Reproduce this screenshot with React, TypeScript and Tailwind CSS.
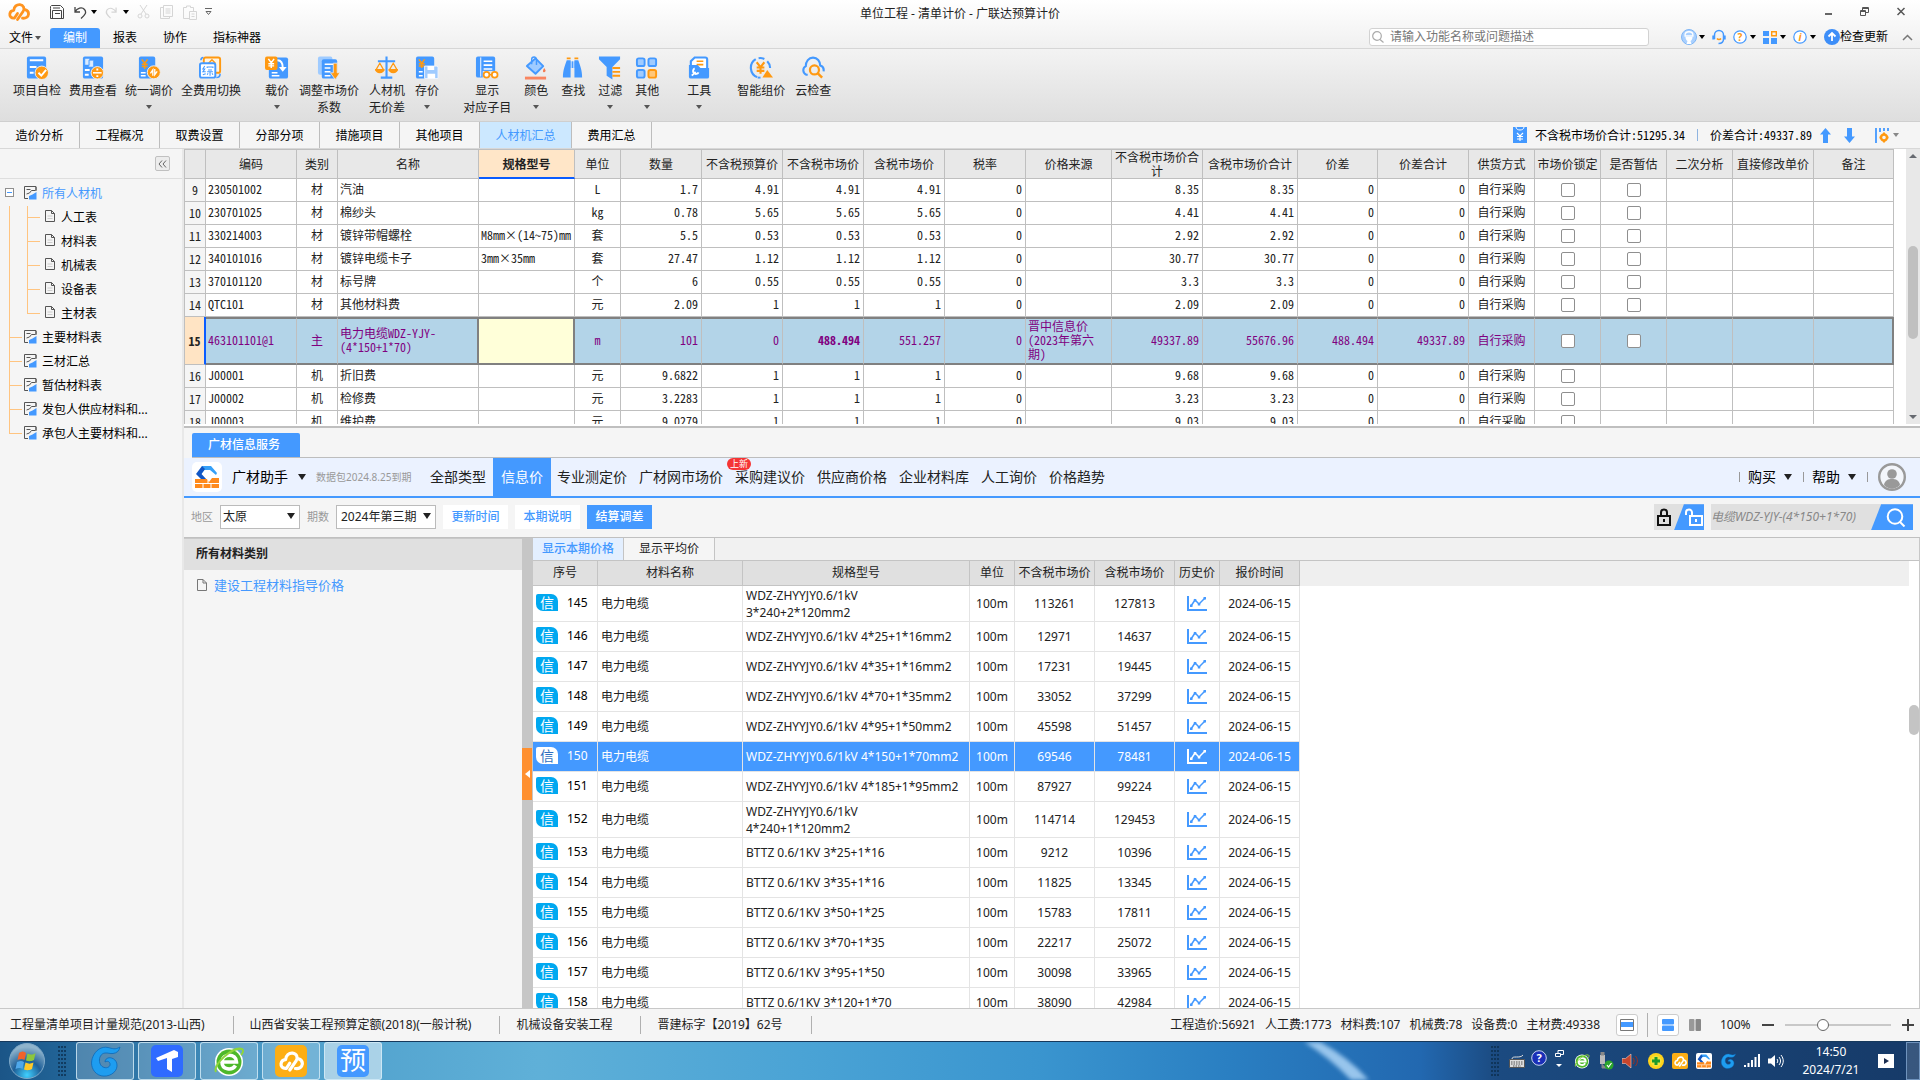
import type { ReactNode } from "react";

const BLUE = "#4499ff";
const ORANGE = "#ff9911";

function Caret({ className = "text-[#555]" }: { className?: string }) {
  return (
    <svg width="6" height="4" viewBox="0 0 6 4" className={className} aria-hidden="true">
      <path d="M0 0h6L3 4z" fill="currentColor" />
    </svg>
  );
}

function BigCaret() {
  return (
    <svg width="8" height="6" viewBox="0 0 8 6" className="text-[#222]" aria-hidden="true">
      <path d="M0 0h8L4 6z" fill="currentColor" />
    </svg>
  );
}

function CloudLogo({ color = "#ff9420", size = 22 }: { color?: string; size?: number }) {
  return (
    <svg width={size} height={size} viewBox="0 0 22 20" fill="none" stroke={color} strokeWidth="2.800" strokeLinecap="round" strokeLinejoin="round" aria-hidden="true">
      <path d="M9.500 11.500L6.500 16C3 16.500 1.500 14 1.800 12c.3-2.300 2-3.600 4-3.700C6 4.500 8.800 2.300 12 2.600c3.500.4 5 4 3.200 6.700L9.500 17.500" />
      <path d="M17 7.600c2.500.6 3.700 2.500 3.500 4.700-.3 2.700-2.700 4.300-6 3.900" />
    </svg>
  );
}

/* ---------- ribbon icons ---------- */

const icons: Record<string, ReactNode> = {
  check: (
    <>
      <rect x="2" y="0" width="20" height="23" rx="2" fill={BLUE} />
      <path d="M5 4h14M5 11h7M5 17h4" stroke="#fff" strokeWidth="2" />
      <circle cx="17.500" cy="17" r="7" fill={ORANGE} stroke="#eee" />
      <path d="M14 17l3 3 5-6" stroke="#fff" strokeWidth="2" fill="none" />
    </>
  ),
  view: (
    <>
      <rect x="2" y="0" width="21" height="23" rx="2" fill={BLUE} />
      <path d="M4 2h5v7H4zM8 4h5v7H8z" fill="#dcecff" stroke={BLUE} strokeWidth=".6" />
      <path d="M4 14h5M4 19h4" stroke="#fff" strokeWidth="2" />
      <circle cx="17" cy="17" r="6.500" fill={ORANGE} stroke="#eee" />
      <path d="M12.500 17h9" stroke="#fff" strokeWidth="1.600" />
      <path d="M17 12.500v2M17 19.500v2" stroke="#fff" strokeWidth="2" />
    </>
  ),
  unify: (
    <>
      <rect x="2" y="0" width="17" height="23" rx="2" fill={BLUE} />
      <path d="M5 3l3 4 3-4M8 7v6M5 8h6M5 10.500h6" stroke={ORANGE} strokeWidth="1.500" fill="none" />
      <path d="M4 17h5M4 20h5" stroke="#fff" strokeWidth="1.500" />
      <circle cx="17.500" cy="16.500" r="6.800" fill={ORANGE} stroke="#eee" />
      <path d="M14 17.500l2.500-3.500v6M21 15.500L18.500 19v-6" stroke="#fff" strokeWidth="1.400" fill="none" />
    </>
  ),
  full: (
    <>
      <rect x="5" y="1" width="17" height="16" rx="2" fill="#fff4e2" stroke={ORANGE} strokeWidth="2" />
      <path d="M10 7l3.500-3.500L17 7M10 9h7" stroke={ORANGE} strokeWidth="1.500" fill="none" />
      <rect x="1" y="7" width="16" height="15" rx="2" fill="#fff" stroke={BLUE} strokeWidth="2" />
      <path d="M6 10l-2 3h2l-2 3h3M4 19l3-1M8.500 12v-1h6v1M9.500 14h4M8.500 16h6M11.500 16v4M9.500 17.500L8.500 19M13.500 17.500l1 1.500" stroke={BLUE} strokeWidth="1.100" fill="none" />
      <path d="M22 18c0 2.500-1 4-4 4M2 4c0-1.500 1-3 2.500-3" stroke={BLUE} strokeWidth="1.600" fill="none" />
    </>
  ),
  load: (
    <>
      <rect x="4" y="1" width="20" height="22" rx="2" fill={BLUE} />
      <rect x="0" y="0" width="13" height="14" rx="2" fill={ORANGE} />
      <path d="M3.500 2.500l3 4 3-4M6.500 6.500V12M3.500 7.500h6M3.500 9.800h6" stroke="#fff" strokeWidth="1.500" fill="none" />
      <path d="M13 4c4 0 5.500 3 5.500 8" stroke="#fff" strokeWidth="2" fill="none" />
      <path d="M14.500 11h8l-4 5z" fill="#fff" />
      <path d="M7 17h6M7 20h8" stroke="#fff" strokeWidth="1.500" />
    </>
  ),
  adjust: (
    <>
      <rect x="1" y="0" width="15" height="19" rx="2" fill="#9fcbff" />
      <rect x="5" y="3" width="16" height="20" rx="2" fill={BLUE} />
      <path d="M8 8h9M8 12h6M8 16h6M8 20h6" stroke="#fff" strokeWidth="1.500" />
      <path d="M17 7h4v10h3l-5 7-5-7h3z" fill={ORANGE} stroke="#eee" strokeWidth=".8" />
    </>
  ),
  scale: (
    <>
      <path d="M12 0v21M3 5h18M6 22h12" stroke={BLUE} strokeWidth="2.200" fill="none" />
      <path d="M5 7l-4 7h8zM19 7l-4 7h8z" stroke={ORANGE} strokeWidth="1.300" fill="none" />
      <path d="M0 13h10a5 4.500 0 0 1-10 0zM14 13h10a5 4.500 0 0 1-10 0z" fill={ORANGE} />
    </>
  ),
  save: (
    <>
      <rect x="1" y="0" width="19" height="23" rx="2" fill={BLUE} />
      <path d="M4 3l3 4 3-4M7 7v5M4 7.500h6M4 10h6" stroke={ORANGE} strokeWidth="1.500" fill="none" />
      <path d="M4 16h4M4 20h4" stroke="#fff" strokeWidth="1.500" />
      <path d="M10 10h13l1 1v12H10z" fill="#9fcbff" stroke="#eef5ff" />
      <path d="M13 10h7v4h-7zM13 18h8v5h-8z" fill="#fff" />
    </>
  ),
  show: (
    <>
      <rect x="1" y="0" width="20" height="22" rx="2" fill={BLUE} />
      <path d="M6 1v20" stroke="#fff" />
      <path d="M9 5h9M9 9h9M9 13h9" stroke="#fff" strokeWidth="1.600" />
      <rect x="8" y="15" width="16" height="9" fill="#e6e6e6" />
      <circle cx="12" cy="19" r="3" stroke={ORANGE} strokeWidth="1.800" fill="#fff" />
      <circle cx="20.500" cy="19" r="3" stroke={ORANGE} strokeWidth="1.800" fill="#fff" />
      <path d="M15 19h3" stroke={ORANGE} strokeWidth="1.500" />
    </>
  ),
  color: (
    <>
      <path d="M3 10L12 2l8 8-8 8z" fill="#9fcbff" stroke={BLUE} strokeWidth="2" strokeLinejoin="round" />
      <path d="M8 8V3a2.500 2.500 0 0 1 5 0v6" stroke={BLUE} strokeWidth="1.500" fill="none" />
      <path d="M21 12c1.500 2 2 3 1 4s-3 0-2-2z" fill="#f47b50" />
      <rect x="1" y="21" width="22" height="3" fill="#f98560" />
    </>
  ),
  find: (
    <>
      <path d="M6 4h4v18H2C2 14 4 10 6 4zM14 4h4c2 6 4 10 4 18h-8z" fill={BLUE} />
      <path d="M10 5h4v7h-4z" fill={BLUE} />
      <path d="M6 1h4v2H6zM14 1h4v2h-4z" fill={ORANGE} />
      <path d="M11 4v8M13 4v8" stroke="#fff" strokeWidth=".6" />
    </>
  ),
  filter: (
    <>
      <path d="M1 0h22v3l-8 8v13l-6-4v-9L1 3z" fill={BLUE} />
      <path d="M15 12h8M15 16h8M15 20h8" stroke={ORANGE} strokeWidth="2" />
    </>
  ),
  other: (
    <>
      <rect x="2" y="2" width="8" height="8" rx="2" fill="#9fcbff" stroke={BLUE} strokeWidth="2" />
      <rect x="14" y="2" width="8" height="8" rx="2" fill="#9fcbff" stroke={BLUE} strokeWidth="2" />
      <rect x="2" y="14" width="8" height="8" rx="2" fill="#9fcbff" stroke={BLUE} strokeWidth="2" />
      <rect x="14" y="14" width="8" height="8" rx="2" fill="#ffc77a" stroke={ORANGE} strokeWidth="2" />
    </>
  ),
  tool: (
    <>
      <path d="M4 10V5l4-4h11a2 2 0 0 1 2 2v10" fill="#fff" stroke={BLUE} strokeWidth="2.200" />
      <path d="M10 5h7M10 8.500h7" stroke={ORANGE} strokeWidth="1.600" />
      <path d="M2 9h9l3 3h9v9a2 2 0 0 1-2 2H4a2 2 0 0 1-2-2z" fill={BLUE} />
      <path d="M5 20l4-4M8 12.500a3 3 0 1 0 4 4" stroke="#fff" strokeWidth="2" fill="none" />
    </>
  ),
  smart: (
    <>
      <path d="M8.500 21.500A10.500 10.500 0 0 1 7 2.800M10 1.800a10 10 0 0 1 6 .8M19 5a10 10 0 0 1 3 7" stroke={BLUE} strokeWidth="2.200" fill="none" />
      <path d="M8 6l4 5 4-5M12 11v7M8 11.500h8M8 15h8" stroke={ORANGE} strokeWidth="2.200" fill="none" />
      <path d="M19 14l6 8H14z" fill={ORANGE} />
      <path d="M9 22h3" stroke={BLUE} strokeWidth="2" />
    </>
  ),
  cloud: (
    <>
      <path d="M7 19H5.500a5 5 0 0 1-.5-9C5 5 8 1.200 12.500 1.200S20 5 20 9.500c3 1 4 3.500 3.500 6" stroke={BLUE} strokeWidth="2.200" fill="none" />
      <circle cx="14" cy="14" r="4.700" stroke={ORANGE} strokeWidth="2.300" fill="none" />
      <path d="M17.500 17.500L22 22" stroke={ORANGE} strokeWidth="2.600" />
    </>
  ),
};

type Tool = { icon: string; label: string; second?: string; drop?: boolean };

const toolGroups: { className: string; tools: Tool[] }[] = [
  {
    className: "flex gap-2",
    tools: [
      { icon: "check", label: "项目自检" },
      { icon: "view", label: "费用查看" },
      { icon: "unify", label: "统一调价", drop: true },
      { icon: "full", label: "全费用切换" },
    ],
  },
  {
    className: "flex gap-2.5 ml-6",
    tools: [
      { icon: "load", label: "载价", drop: true },
      { icon: "adjust", label: "调整市场价", second: "系数" },
      { icon: "scale", label: "人材机", second: "无价差" },
      { icon: "save", label: "存价", drop: true },
    ],
  },
  {
    className: "flex gap-[13px] ml-6",
    tools: [
      { icon: "show", label: "显示", second: "对应子目" },
      { icon: "color", label: "颜色", drop: true },
      { icon: "find", label: "查找" },
      { icon: "filter", label: "过滤", drop: true },
      { icon: "other", label: "其他", drop: true },
    ],
  },
  { className: "flex ml-7", tools: [{ icon: "tool", label: "工具", drop: true }] },
  {
    className: "flex gap-2.5 ml-[26px]",
    tools: [
      { icon: "smart", label: "智能组价" },
      { icon: "cloud", label: "云检查" },
    ],
  },
];

function QuickBar() {
  return (
    <div className="flex items-center h-6 pl-2">
      <CloudLogo />
      <button aria-label="保存" className="ml-5">
        <svg width="14" height="14" viewBox="0 0 14 14" fill="none" stroke="#444">
          <path d="M.5 3.500v-2l1-1h9l3 3v10h-13zM2.500 13.500v-8h9v8M3 3h7M5 8.500h5" />
        </svg>
      </button>
      <button aria-label="撤销" className="ml-2.5">
        <svg width="13" height="13" viewBox="0 0 13 13" fill="none" stroke="#444" strokeWidth="1.300">
          <path d="M1 1v5h5M1 6C3 2 8 .5 10.500 3.500S11 9 7 12.500" />
        </svg>
      </button>
      <span className="ml-1"><Caret className="text-black" /></span>
      <button aria-label="恢复" className="ml-2">
        <svg width="12" height="13" viewBox="0 0 13 13" fill="none" stroke="#d5d5d5" strokeWidth="1.300">
          <path d="M12 1v5H7M12 6C10 2 5 .5 2.500 3.500S2 9 6 12.500" />
        </svg>
      </button>
      <span className="ml-1.5"><Caret className="text-black" /></span>
      <button aria-label="剪切" className="ml-2">
        <svg width="13" height="14" viewBox="0 0 13 14" fill="none" stroke="#d5d5d5">
          <circle cx="3" cy="11" r="2" />
          <circle cx="10" cy="11" r="2" />
          <path d="M3 0l6 9M10 0L4 9" />
        </svg>
      </button>
      <button aria-label="复制" className="ml-2.5">
        <svg width="13" height="14" viewBox="0 0 13 14" fill="none" stroke="#d5d5d5">
          <path d="M3.500.5h9v11h-9zM3 2.500H.5v11h9V12M5.500 4h5M5.500 6h5M5.500 8h5" />
        </svg>
      </button>
      <button aria-label="粘贴" className="ml-2.5">
        <svg width="14" height="15" viewBox="0 0 14 15" fill="none" stroke="#d5d5d5">
          <path d="M6 13.500H.5v-11h3V1h4v1.500h3V6M6.500 6.500h7v8h-7zM8.500 9h3M8.500 11.500h3" />
        </svg>
      </button>
      <button aria-label="自定义" className="ml-2">
        <svg width="7" height="8" viewBox="0 0 7 8" fill="none" stroke="#666">
          <path d="M0 .5h7M1 3.500l2.500 3 2.500-3z" />
        </svg>
      </button>
    </div>
  );
}

function Header() {
  return (
    <header className="shrink-0 bg-linear-to-b from-white to-[#f0f0f0] border-b border-[#d6d6d6]">
      <div className="grid grid-cols-[1fr_auto_1fr] h-7">
        <QuickBar />
        <h1 className="leading-7 text-[#222]">单位工程 - 清单计价 - 广联达预算计价</h1>
        <div className="flex justify-end gap-7 pr-[15px] pt-1.5">
          <button aria-label="最小化" className="h-2.5"><svg width="7" height="9" viewBox="0 0 7 9"><path d="M0 7h7" stroke="#666" strokeWidth="2" /></svg></button>
          <button aria-label="还原" className="h-2.5"><svg width="9" height="9" viewBox="0 0 9 9" fill="none" stroke="#555"><path d="M.5 3.500h5v5h-5zM2.500 3V.5h6v5H6M.5 4.500h5M3 1.500h5" /></svg></button>
          <button aria-label="关闭" className="h-2.5"><svg width="8" height="9" viewBox="0 0 8 9"><path d="M.5 1l7 7M7.500 1l-7 7" stroke="#555" strokeWidth="1.500" /></svg></button>
        </div>
      </div>
      <div className="flex items-center h-5">
        <nav className="flex h-5 leading-5">
          <button className="pl-[9px] w-[50px] flex items-center gap-0.5">文件<Caret /></button>
          <button className="w-[50px] bg-[#4499ff] text-white rounded-t-[3px]">编制</button>
          <button className="w-[50px]">报表</button>
          <button className="w-[50px]">协作</button>
          <button className="w-[74px]">指标神器</button>
        </nav>
        <label className="ml-auto flex items-center w-[280px] h-[18px] bg-white border border-[#d2d2d2] rounded-[3px] px-0.5 mb-0.5">
          <svg width="12" height="12" viewBox="0 0 12 12" fill="none" stroke="#aaa" strokeWidth="1.200" aria-hidden="true">
            <circle cx="5" cy="5" r="4.300" />
            <path d="M8 8.500l3.500 3" />
          </svg>
          <input aria-label="搜索功能" placeholder="请输入功能名称或问题描述" className="ml-1.5 flex-1 outline-none placeholder:text-[#777]" />
        </label>
        <div className="flex items-center ml-8 mb-0.5 pr-[7px]">
          <svg width="16" height="16" viewBox="0 0 16 16"><circle cx="8" cy="8" r="7.500" fill="#a9d0ff" stroke="#7fb6f5" /><path d="M4 6.500c0-5 8-5 8 0M3.500 7h9" stroke="#fff" strokeWidth="1.300" fill="none" /><path d="M4.500 8h7c0 2-1 3.500-2 4l1 3h-5l1-3c-1-.5-2-2-2-4z" fill="#fff" /></svg>
          <span className="ml-0.5 mr-[7px]"><Caret className="text-black" /></span>
          <svg width="14" height="16" viewBox="0 0 14 16" fill="none"><path d="M2.500 10V6a4.500 4.500 0 0 1 9 0v4c0 3-2 4.500-5 4.500" stroke={BLUE} strokeWidth="1.500" /><path d="M1.500 6.500v4M12.500 6.500v4" stroke={BLUE} strokeWidth="2.400" /><path d="M5 9.500c1 1.300 3 1.300 4 0" stroke={ORANGE} strokeWidth="1.500" /></svg>
          <svg width="14" height="14" viewBox="0 0 14 14" className="ml-[7px]"><circle cx="7" cy="7" r="6.200" fill="#fff" stroke={BLUE} strokeWidth="1.200" /><text x="7" y="10.500" textAnchor="middle" fontSize="10" fontWeight="bold" fill={ORANGE}>?</text></svg>
          <span className="ml-[3px] mr-[7px]"><Caret className="text-black" /></span>
          <svg width="14" height="14" viewBox="0 0 14 14"><path d="M0 1h6v5H0zM0 8h6v6H0zM8 8h6v6H8z" fill={BLUE} /><path d="M8.700 1.700h4.600v4H8.700z" fill="none" stroke={ORANGE} strokeWidth="1.400" /></svg>
          <span className="ml-[3px] mr-[7px]"><Caret className="text-black" /></span>
          <svg width="14" height="14" viewBox="0 0 14 14"><circle cx="7" cy="7" r="6.200" fill="#fff" stroke={BLUE} strokeWidth="1.200" /><text x="7" y="10.500" textAnchor="middle" fontSize="10" fontStyle="italic" fontWeight="bold" fill={ORANGE}>i</text></svg>
          <span className="ml-[3px] mr-2"><Caret className="text-black" /></span>
          <button className="flex items-center text-black">
            <svg width="16" height="16" viewBox="0 0 16 16"><circle cx="8" cy="8" r="8" fill="#3d8ef8" /><path d="M8 4v8M4.500 7.500L8 4l3.500 3.500" stroke="#fff" strokeWidth="1.800" fill="none" /></svg>
            检查更新
          </button>
          <button aria-label="折叠功能区" className="ml-3.5">
            <svg width="11" height="7" viewBox="0 0 11 7"><path d="M1 6l4.500-4.500L10 6" fill="none" stroke="#777" strokeWidth="1.500" /></svg>
          </button>
        </div>
      </div>
    </header>
  );
}

function Ribbon() {
  return (
    <div className="shrink-0 flex h-[73px] pt-[7px] pl-[13px] bg-linear-to-b from-[#f3f3f3] to-[#dedede] border-b border-[#cfcfcf]">
      {toolGroups.map((group, i) => (
        <div key={i} className={group.className}>
          {group.tools.map((tool) => (
            <button key={tool.icon} className="flex flex-col items-center leading-[17px] text-[#222]">
              <svg width="24" height="24" viewBox="0 0 25 24" fill="none" className="mb-0.5" aria-hidden="true">
                {icons[tool.icon]}
              </svg>
              <span>{tool.label}</span>
              {tool.second && <span>{tool.second}</span>}
              {tool.drop && <span className="mt-1.5"><Caret /></span>}
            </button>
          ))}
        </div>
      ))}
    </div>
  );
}

const modules = ["造价分析", "工程概况", "取费设置", "分部分项", "措施项目", "其他项目", "人材机汇总", "费用汇总"];

function ModuleTabs() {
  return (
    <div className="shrink-0 flex h-[27px] bg-[#f5f5f5] border-b border-[#d8d8d8]">
      {modules.map((name) => (
        <button
          key={name}
          className={
            name === "人材机汇总"
              ? "w-[92px] pt-0.5 border-r border-[#bdbdbd] bg-[#cce8ff] text-[#4499ff]"
              : "w-20 pt-0.5 border-r border-[#bdbdbd] text-black"
          }
        >
          {name}
        </button>
      ))}
      <div className="ml-auto flex items-center pr-[21px] text-black font-['Noto_Sans_Mono_CJK_SC','Noto_Sans_CJK_SC',monospace]">
        <svg width="14" height="16" viewBox="0 0 14 16"><path d="M0 0h14v16H0z" fill={BLUE} /><path d="M3 0c0 4 8 4 8 0" fill="none" stroke="#fff" /><path d="M4 6l3 3 3-3M7 9v5M4 9.500h6M4 12h6" stroke="#fff" strokeWidth="1.200" fill="none" /></svg>
        <span className="ml-2">不含税市场价合计:51295.34</span>
        <span className="mx-3 h-3 w-px bg-[#8fb4e0]" />
        <span>价差合计:49337.89</span>
        <svg width="11" height="15" viewBox="0 0 11 15" className="ml-2"><path d="M5.500 0L11 6.500H8V15H3V6.500H0z" fill={BLUE} /></svg>
        <svg width="11" height="15" viewBox="0 0 11 15" className="ml-[13px]"><path d="M5.500 15L11 8.500H8V0H3v8.500H0z" fill={BLUE} /></svg>
        <svg width="14" height="15" viewBox="0 0 14 15" className="ml-5 mr-1"><path d="M1 0v15M5 0v4M9 0v3M13 0v3" stroke={BLUE} strokeWidth="1.800" /><circle cx="9" cy="9.500" r="3" fill="none" stroke={ORANGE} strokeWidth="2.400" /><path d="M9 4.500v2M9 12.500v2M4.500 9.500h2M11.500 9.500h2" stroke={ORANGE} strokeWidth="2" /></svg>
        <Caret className="text-[#888]" />
      </div>
    </div>
  );
}

/* ---------- category tree ---------- */

function ChartDoc() {
  return (
    <svg width="13" height="14" viewBox="0 0 13 14" className="mr-[5px] mb-0.5" fill="none" aria-hidden="true">
      <path d="M12 4V.5H.5v12H4M12 1v4" stroke="#555" />
      <path d="M2.500 3.500h4M2.500 8l3-1 2-2.500h4" stroke="#555" />
      <path d="M5 13.500V10l3.500-1.500L12.500 6v7.500z" fill={BLUE} />
    </svg>
  );
}

function PageDoc() {
  return (
    <svg width="10" height="12" viewBox="0 0 10 12" fill="none" stroke="#555" aria-hidden="true">
      <path d="M.5.500h6l3 3v8h-9zM6.500.500v3h3" />
      <path d="M2.500 6h5M2.500 8.500h5" stroke="#ccc" />
    </svg>
  );
}

function Branch({ last }: { last?: boolean }) {
  return (
    <span className="flex flex-col h-full w-[13px]">
      <span className="h-1/2 border-l border-b border-[#ffc480]" />
      {!last && <span className="h-1/2 border-l border-[#ffc480]" />}
    </span>
  );
}

const children = ["人工表", "材料表", "机械表", "设备表", "主材表"];
const roots = ["主要材料表", "三材汇总", "暂估材料表", "发包人供应材料和...", "承包人主要材料和..."];

function Sidebar() {
  return (
    <aside className="w-[184px] shrink-0 bg-[#f5f5f5] border-r-2 border-[#e8e8e8] text-black">
      <div className="h-[30px] border-b border-[#dedede] flex justify-end items-center pr-3">
        <button aria-label="收起" className="w-[15px] h-[15px] border border-[#c0c0c0] bg-[#ececec] rounded-[2px] flex items-center justify-center">
          <svg width="9" height="8" viewBox="0 0 9 8"><path d="M4 .5L1 4l3 3.500M8 .5L5 4l3 3.500" fill="none" stroke="#666" /></svg>
        </button>
      </div>
      <ul className="pt-[3px]">
        <li className="flex items-center h-6 pl-[5px]">
          <button aria-label="折叠" className="w-[9px] h-[9px] border border-[#8f8f8f] bg-white flex items-center justify-center mr-2.5 mb-1">
            <span className="w-[5px] h-px bg-[#4499ff]" />
          </button>
          <ChartDoc />
          <a href="#all" className="text-[#4499ff]">所有人材机</a>
        </li>
        {children.map((name, i) => (
          <li key={name} className="flex items-center h-6 pl-[9px]">
            <span className="h-full w-[18px] border-l border-[#ffc480]" />
            <Branch last={i === children.length - 1} />
            <span className="ml-[5px] mr-1.5 mb-1"><PageDoc /></span>
            <a href="#item">{name}</a>
          </li>
        ))}
        {roots.map((name, i) => (
          <li key={name} className="flex items-center h-6 pl-[9px]">
            <Branch last={i === roots.length - 1} />
            <span className="ml-0.5"><ChartDoc /></span>
            <a href="#item">{name}</a>
          </li>
        ))}
      </ul>
    </aside>
  );
}

/* ---------- price table ---------- */

const columns: [string, string][] = [
  ["", "w-[21px]"],
  ["编码", "w-[91px]"],
  ["类别", "w-[41px]"],
  ["名称", "w-[141px]"],
  ["规格型号", "w-[96px]"],
  ["单位", "w-[46px]"],
  ["数量", "w-[81px]"],
  ["不含税预算价", "w-[81px]"],
  ["不含税市场价", "w-[81px]"],
  ["含税市场价", "w-[81px]"],
  ["税率", "w-[81px]"],
  ["价格来源", "w-[86px]"],
  ["不含税市场价合计", "w-[91px]"],
  ["含税市场价合计", "w-[95px]"],
  ["价差", "w-20"],
  ["价差合计", "w-[91px]"],
  ["供货方式", "w-[66px]"],
  ["市场价锁定", "w-[66px]"],
  ["是否暂估", "w-[66px]"],
  ["二次分析", "w-[66px]"],
  ["直接修改单价", "w-[81px]"],
  ["备注", ""],
];

// no, code, kind, name, spec, unit, qty, budget, market, taxed, rate, source, total, taxed total, diff, diff total
const rows: string[][] = [
  ["9", "230501002", "材", "汽油", "", "L", "1.7", "4.91", "4.91", "4.91", "0", "", "8.35", "8.35", "0", "0"],
  ["10", "230701025", "材", "棉纱头", "", "kg", "0.78", "5.65", "5.65", "5.65", "0", "", "4.41", "4.41", "0", "0"],
  ["11", "330214003", "材", "镀锌带帽螺栓", "M8mm×(14~75)mm", "套", "5.5", "0.53", "0.53", "0.53", "0", "", "2.92", "2.92", "0", "0"],
  ["12", "340101016", "材", "镀锌电缆卡子", "3mm×35mm", "套", "27.47", "1.12", "1.12", "1.12", "0", "", "30.77", "30.77", "0", "0"],
  ["13", "370101120", "材", "标号牌", "", "个", "6", "0.55", "0.55", "0.55", "0", "", "3.3", "3.3", "0", "0"],
  ["14", "QTC101", "材", "其他材料费", "", "元", "2.09", "1", "1", "1", "0", "", "2.09", "2.09", "0", "0"],
  ["15", "463101101@1", "主", "电力电缆WDZ-YJY-(4*150+1*70)", "", "m", "101", "0", "488.494", "551.257", "0", "晋中信息价(2023年第六期)", "49337.89", "55676.96", "488.494", "49337.89"],
  ["16", "J00001", "机", "折旧费", "", "元", "9.6822", "1", "1", "1", "0", "", "9.68", "9.68", "0", "0"],
  ["17", "J00002", "机", "检修费", "", "元", "3.2283", "1", "1", "1", "0", "", "3.23", "3.23", "0", "0"],
  ["18", "J00003", "机", "维护费", "", "元", "9.0279", "1", "1", "1", "0", "", "9.03", "9.03", "0", "0"],
];

function alignOf(col: number) {
  if (col === 0) return "text-center";
  if (col === 1 || col === 3 || col === 4 || col === 11) return "text-left pl-0.5 pb-0.5";
  if (col >= 6 && col <= 15) return "text-right pr-[3px] pb-0.5";
  return "text-center pb-0.5";
}

function cellStyle(col: number, selected: boolean) {
  if (!selected) return col === 0 ? "border-r border-b border-[#bfbfbf] bg-[#f5f5f5]" : "border-r border-b border-[#bfbfbf]";
  if (col === 0) return "border-b border-[#bfbfbf] border-r-2 border-r-[#0a5cff] bg-[#ffe4c4] text-[#222] font-bold";
  if (col === 3) return "border-y-2 border-y-[#808080] border-r-2 border-r-[#808080]";
  if (col === 4) return "border-y-2 border-y-[#808080] border-r-2 border-r-[#808080] bg-[#ffffd9]";
  if (col === 8) return "border-y-2 border-y-[#808080] border-r border-r-[#bfbfbf] font-bold";
  if (col === 21) return "border-y-2 border-y-[#808080] border-r-2 border-r-[#808080]";
  return "border-y-2 border-y-[#808080] border-r border-r-[#bfbfbf]";
}

function Check({ label }: { label: string }) {
  return (
    <input
      type="checkbox"
      aria-label={label}
      className="block mx-auto appearance-none w-3.5 h-3.5 bg-white border border-[#8f8f8f] rounded-[2px]"
    />
  );
}

function PriceTable() {
  return (
    <section className="flex-[278_1_0%] min-h-0 flex border-b-2 border-[#bfbfbf] bg-white">
      <div className="flex-1 min-w-0 overflow-auto [scrollbar-width:none] mb-0.5 mr-3">
        <table className="w-full table-fixed border-separate border-spacing-0 border-l border-[#bfbfbf] text-[#222] leading-[14px] font-['Noto_Sans_Mono_CJK_SC','Noto_Sans_CJK_SC',monospace]">
          <colgroup>
            {columns.map(([name, width]) => (
              <col key={name} className={width} />
            ))}
          </colgroup>
          <thead>
            <tr className="h-[30px]">
              {columns.map(([name]) => (
                <th
                  key={name}
                  className={
                    name === "规格型号"
                      ? "bg-[#ffe6c8] border-r border-t border-[#bfbfbf] border-b-2 border-b-[#0a5cff] font-bold"
                      : "bg-[#e8e8e8] border-r border-b border-t border-[#bfbfbf] font-normal"
                  }
                >
                  {name}
                </th>
              ))}
            </tr>
          </thead>
          <tbody>
            {rows.map((row) => {
              const selected = row[0] === "15";
              return (
                <tr key={row[0]} className={selected ? "h-[47px] bg-[#b3d4e8] text-[#800080]" : "h-[23px]"}>
                  {row.map((value, col) => (
                    <td key={col} className={`${cellStyle(col, selected)} ${alignOf(col)}`}>
                      {value}
                    </td>
                  ))}
                  <td className={`${cellStyle(16, selected)} text-center pb-0.5`}>自行采购</td>
                  <td className={cellStyle(17, selected)}><Check label="市场价锁定" /></td>
                  <td className={cellStyle(18, selected)}>{row[2] !== "机" && <Check label="是否暂估" />}</td>
                  <td className={cellStyle(19, selected)} />
                  <td className={cellStyle(20, selected)} />
                  <td className={cellStyle(21, selected)} />
                </tr>
              );
            })}
          </tbody>
        </table>
      </div>
      <div className="w-3.5 bg-[#e8e8e8] flex flex-col items-center py-[5px] mb-0.5">
        <svg width="8" height="4" viewBox="0 0 8 4"><path d="M0 4h8L4 0z" fill="#666a70" /></svg>
        <div className="flex-[88_1_0%]" />
        <div className="flex-[93_1_0%] w-2.5 rounded-full bg-[#c0c0c0]" />
        <div className="flex-[77_1_0%]" />
        <svg width="8" height="4" viewBox="0 0 8 4"><path d="M0 0h8L4 4z" fill="#666a70" /></svg>
      </div>
    </section>
  );
}

/* ---------- info service panel ---------- */

const navItems = ["专业测定价", "广材网市场价", "采购建议价", "供应商价格", "企业材料库", "人工询价", "价格趋势"];

function CraneLogo({ size }: { size: number }) {
  return (
    <svg width={size} height={size} viewBox="0 0 24 24" aria-hidden="true">
      <path d="M7 1h9l6 7-1 2-6-5H9.500L6 9z" fill="#35a0f8" />
      <path d="M7 1L1 9l6 6h5L6.500 9 10 4z" fill="#1256c4" />
      <path d="M0 14h12l2 3 3-4h2v10H0z" fill="#ff8a1c" />
      <path d="M17 13h7v10h-7z" fill="#ff8a1c" />
      <path d="M0 18.500h24M8 19v4M16 19v4M13 14v4" stroke="#fff" />
    </svg>
  );
}

function ServiceNav() {
  return (
    <div className="shrink-0 flex items-center h-10 bg-[#ebf2ff] border-b-2 border-[#4499ff] pl-2 pr-3.5 text-sm text-[#222]">
      <span className="w-[30px] h-[30px] rounded-[5px] bg-white flex items-center justify-center">
        <CraneLogo size={24} />
      </span>
      <button className="ml-2.5 flex items-center gap-2.5 text-black">广材助手<BigCaret /></button>
      <span className="ml-2.5 w-[108px] text-[10px] text-[#999] whitespace-nowrap">数据包2024.8.25到期</span>
      <nav className="flex h-[38px] items-center">
        <button className="pr-[7px] pl-1.5">全部类型</button>
        <button className="px-2 h-full bg-[#4499ff] text-white">信息价</button>
        {navItems.map((name) => (
          <button key={name} className="px-1.5 relative h-full">
            {name}
            {name === "采购建议价" && (
              <span className="absolute -left-0.5 top-0 w-6 h-3 rounded-full bg-[#f53535] text-white text-[9px] leading-3">上新</span>
            )}
          </button>
        ))}
      </nav>
      <div className="ml-auto flex items-center text-black">
        <span className="w-px h-2.5 bg-[#999]" />
        <button className="flex items-center gap-2 mx-2">购买<BigCaret /></button>
        <span className="w-px h-2.5 bg-[#999] ml-[3px]" />
        <button className="flex items-center gap-2 mx-2">帮助<BigCaret /></button>
        <span className="w-px h-2.5 bg-[#999] ml-[3px] mr-2.5" />
        <svg width="28" height="28" viewBox="0 0 28 28" aria-hidden="true">
          <circle cx="14" cy="14" r="12.800" fill="#f3f6fb" stroke="#999" strokeWidth="2.400" />
          <circle cx="14" cy="11" r="4.800" fill="#999" />
          <path d="M6 22c1-5 4-6 8-6s7 1 8 6c-5 5-11 5-16 0z" fill="#999" />
        </svg>
      </div>
    </div>
  );
}

function Picker({ label, value, className }: { label: string; value: string; className: string }) {
  return (
    <label className="flex items-center text-[11px] text-[#999] mr-[7px]">
      {label}
      <span className="relative ml-[7px] text-xs text-[#222]">
        <select className={className}>
          <option>{value}</option>
        </select>
        <span className="absolute right-[5px] top-2 pointer-events-none"><BigCaret /></span>
      </span>
    </label>
  );
}

function FilterBar() {
  return (
    <div className="shrink-0 flex items-center h-10 bg-[#f5f5f5] border-b border-[#c0c0c0] px-[7px] pb-px">
      <Picker label="地区" value="太原" className="block w-20 h-6 appearance-none border border-[#bbb] bg-white pl-0.5" />
      <Picker label="期数" value="2024年第三期" className="block w-[100px] h-6 appearance-none border border-[#bbb] bg-white pl-1" />
      <button className="w-[65px] h-6 mr-[7px] bg-white text-[#4499ff] font-medium">更新时间</button>
      <button className="w-[65px] h-6 mr-[7px] bg-white text-[#4499ff] font-medium">本期说明</button>
      <button className="w-[65px] h-6 bg-[#4499ff] text-white font-medium">结算调差</button>
      <div className="ml-auto flex h-[26px] w-[50px] bg-[#e0e0e0]">
        <button aria-label="锁定" className="w-5 flex items-center justify-center">
          <svg width="14" height="18" viewBox="0 0 14 18" fill="none" stroke="#111" strokeWidth="2"><path d="M1 8h12v9H1zM4 8V4.500a3 3 0 0 1 6 0V8" /><path d="M7 11v3" /></svg>
        </button>
        <button aria-label="解锁" className="flex-1 bg-[#4499ff] flex items-center justify-end pr-px [clip-path:polygon(33%_0,100%_0,100%_100%,0_100%)]">
          <svg width="18" height="18" viewBox="0 0 18 18" fill="none" stroke="#fff" strokeWidth="2"><path d="M5 8h12v9H5zM7 8V4.500a3 3 0 0 0-6 0V7" /><path d="M11 11v3" /></svg>
        </button>
      </div>
      <div className="ml-[7px] flex h-[26px] w-[202px] bg-[#e0e0e0]">
        <input aria-label="材料搜索" defaultValue="电缆WDZ-YJY-(4*150+1*70)" className="w-40 min-w-0 italic text-[#888] outline-none" />
        <button aria-label="搜索" className="flex-1 bg-[#4499ff] flex items-center justify-center pl-2 [clip-path:polygon(24%_0,100%_0,100%_100%,0_100%)]">
          <svg width="20" height="19" viewBox="0 0 20 19" fill="none" stroke="#fff" strokeWidth="2"><circle cx="9" cy="8.500" r="7.300" /><path d="M14 14l4.500 4.500" /></svg>
        </button>
      </div>
    </div>
  );
}

const materials: [string, string, string, string][] = [
  ["145", "WDZ-ZHYYJY0.6/1kV 3*240+2*120mm2", "113261", "127813"],
  ["146", "WDZ-ZHYYJY0.6/1kV 4*25+1*16mm2", "12971", "14637"],
  ["147", "WDZ-ZHYYJY0.6/1kV 4*35+1*16mm2", "17231", "19445"],
  ["148", "WDZ-ZHYYJY0.6/1kV 4*70+1*35mm2", "33052", "37299"],
  ["149", "WDZ-ZHYYJY0.6/1kV 4*95+1*50mm2", "45598", "51457"],
  ["150", "WDZ-ZHYYJY0.6/1kV 4*150+1*70mm2", "69546", "78481"],
  ["151", "WDZ-ZHYYJY0.6/1kV 4*185+1*95mm2", "87927", "99224"],
  ["152", "WDZ-ZHYYJY0.6/1kV 4*240+1*120mm2", "114714", "129453"],
  ["153", "BTTZ 0.6/1KV 3*25+1*16", "9212", "10396"],
  ["154", "BTTZ 0.6/1KV 3*35+1*16", "11825", "13345"],
  ["155", "BTTZ 0.6/1KV 3*50+1*25", "15783", "17811"],
  ["156", "BTTZ 0.6/1KV 3*70+1*35", "22217", "25072"],
  ["157", "BTTZ 0.6/1KV 3*95+1*50", "30098", "33965"],
  ["158", "BTTZ 0.6/1KV 3*120+1*70", "38090", "42984"],
];

const materialColumns: [string, string][] = [
  ["序号", "w-[65px]"],
  ["材料名称", "w-[145px]"],
  ["规格型号", "w-[227px]"],
  ["单位", "w-[45px]"],
  ["不含税市场价", "w-20"],
  ["含税市场价", "w-20"],
  ["历史价", "w-[45px]"],
  ["报价时间", "w-20"],
];

function TrendIcon() {
  return (
    <svg width="20" height="15" viewBox="0 0 20 15" fill="none" stroke="currentColor" aria-hidden="true">
      <path d="M1 0v14h19" strokeWidth="2" />
      <path d="M4 10l4-6 4 4 6-6" strokeWidth="1.500" />
      <path d="M3 8.500h2.500V11H3zM6.800 3h2.500v2.500H6.800zM10.800 7h2.500v2.500h-2.500zM16.500 1H19v2.500h-2.500z" fill="currentColor" stroke="none" />
    </svg>
  );
}

function MaterialTable() {
  return (
    <table className="w-[767px] table-fixed border-separate border-spacing-0 text-[#222] bg-white">
      <colgroup>
        {materialColumns.map(([name, width]) => (
          <col key={name} className={width} />
        ))}
      </colgroup>
      <thead>
        <tr className="h-[25px]">
          {materialColumns.map(([name]) => (
            <th key={name} className="font-normal bg-[#e0e0e0] border-r border-b border-[#c4c4c4] whitespace-nowrap">{name}</th>
          ))}
        </tr>
      </thead>
      <tbody>
        {materials.map(([no, spec, net, gross]) => {
          const selected = no === "150";
          const twoLines = no === "145" || no === "152";
          const cell = "border-r border-b border-[#e4e4e4] text-center";
          return (
            <tr
              key={no}
              className={`${twoLines ? "h-9" : "h-[30px]"} ${selected ? "bg-[#4499ff] text-white" : ""}`}
            >
              <td className="border-r border-b border-[#e4e4e4] pl-[3px] pb-0.5">
                <span className="flex items-center">
                  <span
                    className={`w-[22px] h-[17px] mr-[9px] flex items-center justify-center text-sm leading-4 rounded-tr-[7px] rounded-bl-[7px] rounded-tl-[2px] ${
                      selected ? "bg-white text-[#2f6fc0]" : "bg-[#00a8f0] text-white"
                    }`}
                  >
                    信
                  </span>
                  <span className={selected ? "" : "text-black"}>{no}</span>
                </span>
              </td>
              <td className="border-r border-b border-[#e4e4e4] pl-[3px]">电力电缆</td>
              <td className="border-r border-b border-[#e4e4e4] pl-[3px] leading-[17px]">
                {twoLines ? (
                  <>
                    {spec.split(" ")[0]}
                    <br />
                    {spec.split(" ")[1]}
                  </>
                ) : (
                  <span className="whitespace-nowrap">{spec}</span>
                )}
              </td>
              <td className={cell}>100m</td>
              <td className={cell}>{net}</td>
              <td className={cell}>{gross}</td>
              <td className={cell}>
                <button aria-label="历史价" className={selected ? "block mx-auto text-white" : "block mx-auto text-[#4499ff]"}>
                  <TrendIcon />
                </button>
              </td>
              <td className={cell}>2024-06-15</td>
            </tr>
          );
        })}
      </tbody>
    </table>
  );
}

function ServicePanel() {
  return (
    <section className="flex-[581_1_0%] min-h-0 flex flex-col bg-[#f5f5f5]">
      <div className="shrink-0 pt-[5px] pl-2">
        <div className="border-b border-[#bdbdbd]">
          <button className="block w-[108px] h-6 pr-1 bg-[#4499ff] text-white rounded-t-[2px] font-medium">广材信息服务</button>
        </div>
      </div>
      <ServiceNav />
      <FilterBar />
      <div className="flex-1 min-h-0 flex">
        <div className="w-[338px] shrink-0">
          <h2 className="h-8 leading-[30px] border-t border-[#c8c8c8] bg-[#e0e0e0] pl-3 font-bold text-[#222]">所有材料类别</h2>
          <a href="#guide" className="flex items-center h-[30px] pl-[13px] text-[13px] text-[#4499ff]">
            <svg width="10" height="12" viewBox="0 0 10 12" fill="none" stroke="#777" className="mr-[7px]"><path d="M.5.500h5.500l3.500 3.500v7.500h-9zM6 .5V4h3.500" /></svg>
            建设工程材料指导价格
          </a>
        </div>
        <div className="w-[11px] shrink-0 bg-[#c6c6c6] flex flex-col">
          <div className="flex-[210_1_0%]" />
          <button aria-label="收起类别" className="h-[52px] w-2.5 bg-[#ff9030] flex items-center justify-center">
            <svg width="5" height="8" viewBox="0 0 5 8"><path d="M5 0v8L0 4z" fill="#fff" /></svg>
          </button>
          <div className="flex-[209_1_0%]" />
        </div>
        <div className="flex-1 min-w-0 flex flex-col border-r border-[#c8c8c8]">
          <div className="shrink-0 flex h-[23px] bg-[#f1f1f1] border-b border-[#c4c4c4]">
            <button className="w-[91px] bg-[#e3efff] text-[#4499ff] font-medium border-r border-[#c4c4c4]">显示本期价格</button>
            <button className="w-[91px] bg-[#f5f5f5] text-[#222] border-r border-[#c4c4c4]">显示平均价</button>
          </div>
          <div className="flex-1 min-h-0 flex bg-white">
            <div className="flex-1 min-w-0 overflow-auto [scrollbar-width:none] flex bg-white items-start">
              <MaterialTable />
              <div className="flex-1 h-[25px] bg-[#efefef]" />
            </div>
            <div className="w-2.5 flex flex-col">
              <div className="flex-[144_1_0%]" />
              <div className="flex-[30_1_0%] rounded-full bg-[#c4c4c4]" />
              <div className="flex-[274_1_0%]" />
            </div>
          </div>
        </div>
      </div>
    </section>
  );
}

/* ---------- status bar and taskbar ---------- */

function Divider() {
  return <span className="w-px h-[18px] bg-[#b0b0b0] ml-7 mr-4" />;
}

function StatusBar() {
  return (
    <footer className="shrink-0 flex items-center h-[33px] bg-[#f5f5f5] border-t border-[#c8c8c8] pl-2.5 pr-1.5 text-[#222] whitespace-nowrap">
      <span>工程量清单项目计量规范(2013-山西)</span>
      <Divider />
      <span>山西省安装工程预算定额(2018)(一般计税)</span>
      <Divider />
      <span>机械设备安装工程</span>
      <Divider />
      <span>晋建标字【2019】62号</span>
      <Divider />
      <div className="ml-auto flex items-center gap-[9px]">
        <span>工程造价:56921</span>
        <span>人工费:1773</span>
        <span>材料费:107</span>
        <span>机械费:78</span>
        <span>设备费:0</span>
        <span>主材费:49338</span>
      </div>
      <button aria-label="单栏" className="ml-4 w-[22px] h-[22px] border border-[#ccc] rounded-[3px] bg-white flex items-center justify-center">
        <svg width="14" height="12" viewBox="0 0 14 12"><path d="M.5.5h13v11H.5z" fill="#fff" stroke="#777" /><path d="M1 3h12v5H1z" fill={BLUE} /></svg>
      </button>
      <span className="w-px h-6 bg-[#b0b0b0] mx-[9px]" />
      <button aria-label="上下布局" className="w-[22px] h-[22px] border border-[#ccc] rounded-[3px] bg-white flex items-center justify-center">
        <svg width="12" height="12" viewBox="0 0 12 12"><rect width="12" height="5.500" rx="1" fill={BLUE} /><rect y="6.500" width="12" height="5.500" rx="1" fill={BLUE} /></svg>
      </button>
      <button aria-label="左右布局" className="ml-2.5">
        <svg width="12" height="12" viewBox="0 0 12 12"><rect width="5.500" height="12" rx="1" fill="#999" /><rect x="6.500" width="5.500" height="12" rx="1" fill="#888" /></svg>
      </button>
      <span className="ml-[19px] w-[34px]">100%</span>
      <button aria-label="缩小" className="ml-2"><svg width="12" height="12" viewBox="0 0 12 12"><path d="M0 6h12" stroke="#444" strokeWidth="2" /></svg></button>
      <input
        type="range"
        aria-label="缩放"
        defaultValue={34}
        className="mx-[11px] w-[106px] h-3 appearance-none bg-[linear-gradient(#c8c8c8,#c8c8c8)] bg-[length:100%_2px] bg-center bg-no-repeat [&::-webkit-slider-thumb]:appearance-none [&::-webkit-slider-thumb]:w-3 [&::-webkit-slider-thumb]:h-3 [&::-webkit-slider-thumb]:rounded-full [&::-webkit-slider-thumb]:bg-white [&::-webkit-slider-thumb]:border [&::-webkit-slider-thumb]:border-[#666]"
      />
      <button aria-label="放大"><svg width="12" height="12" viewBox="0 0 12 12"><path d="M0 6h12M6 0v12" stroke="#444" strokeWidth="2" /></svg></button>
    </footer>
  );
}

function Grip() {
  return (
    <svg width="8" height="30" viewBox="0 0 8 30" aria-hidden="true">
      <path d="M1 0v30M4 0v30M7 0v30" stroke="#0c2f4f" strokeWidth="1.500" strokeDasharray="2 2" />
    </svg>
  );
}

function GLogo({ size }: { size: number }) {
  return (
    <svg width={size} height={size} viewBox="0 0 32 32" aria-hidden="true">
      <path d="M31 2c-1 4-3 6-7 6.500-3 .4-5-.8-8-.5-4 .5-6 4.500-5.500 8.500.5 4 3.500 6.500 7 6.200 3-.3 4.500-3 3-5.200-1-1.500-3-1.500-4.500-.5 0-3 3-5 6.500-4 5.500 1.500 7 8 4 12.500-4 6-13.500 7.500-19 3C2 24 1.500 17 4 11.500 6.500 5.500 12.500 1 19 2.500c4.500 1 7 2.500 12-.5z" fill="#1e9df0" stroke="#0c68b8" strokeWidth=".8" />
    </svg>
  );
}

function ELogo({ size }: { size: number }) {
  return (
    <svg width={size} height={size} viewBox="0 0 32 32" aria-hidden="true">
      <circle cx="16" cy="17" r="14" fill="#fff" />
      <circle cx="16" cy="17" r="12.500" fill="#4db82a" />
      <path d="M9 17h14.500c0-9-14.500-9-14.500 0 0 8 10 9 13.500 3.500" fill="none" stroke="#fff" strokeWidth="3.600" />
      <path d="M3 27C-1 20 20 1 29 4c2 1 1 4-1 6" fill="none" stroke="#8ed63c" strokeWidth="2" />
    </svg>
  );
}

const apps: { name: string; icon: ReactNode }[] = [
  { name: "浏览器", icon: <GLogo size={32} /> },
  {
    name: "工具",
    icon: (
      <svg width="32" height="32" viewBox="0 0 32 32"><rect width="32" height="32" rx="5" fill="#2f6bff" /><path d="M5 13L23 5l4 2v5l-6 2v13l-5-3V13l-9 3z" fill="#fff" /></svg>
    ),
  },
  { name: "安全浏览器", icon: <ELogo size={32} /> },
  {
    name: "云计价",
    icon: (
      <span className="w-8 h-8 rounded-[5px] bg-[#fdae15] flex items-center justify-center"><CloudLogo color="#fff" size={25} /></span>
    ),
  },
  {
    name: "预算",
    icon: <span className="w-8 h-8 rounded-[5px] bg-[#4499ff] text-white text-[26px] leading-[30px] text-center">预</span>,
  },
];

function Tray() {
  return (
    <div className="ml-auto flex items-center h-full relative">
      <Grip />
      <svg width="16" height="14" viewBox="0 0 16 14" className="ml-2.5"><path d="M.5 5.500h15v8H.5z" fill="#ddd" stroke="#555" /><path d="M2 8h12M2 10h12M4 12h8" stroke="#555" strokeDasharray="1.500 1" /><path d="M3 5c0-4 8 0 11-4" stroke="#ddd" fill="none" /></svg>
      <svg width="16" height="16" viewBox="0 0 16 16" className="ml-1.5 mb-1.5"><circle cx="8" cy="8" r="7.300" fill="#1a2fb8" stroke="#c8d4f0" /><text x="8" y="12" textAnchor="middle" fontSize="11" fontWeight="bold" fill="#fff">?</text></svg>
      <svg width="9" height="18" viewBox="0 0 9 18" className="ml-2 mb-1" fill="none" stroke="#fff"><path d="M.5 3.500h5v3h-5zM3 3V.5h5.500v4H6" /><path d="M1 14h6l-3 3z" fill="#fff" stroke="none" /></svg>
      <span className="ml-2.5"><ELogo size={16} /></span>
      <svg width="16" height="18" viewBox="0 0 16 18" className="ml-2"><path d="M2 3h5v9H2z" fill="#bbb" /><path d="M3 0h3v3H3zM4 12v4h5" stroke="#888" fill="#888" /><circle cx="11" cy="13" r="4.500" fill="#2ba52b" /><path d="M9 13l1.500 2 3-4" stroke="#fff" fill="none" strokeWidth="1.200" /></svg>
      <svg width="16" height="16" viewBox="0 0 16 16" className="ml-2"><path d="M0 5.500h3.500L9 1v14l-5.500-4.500H0z" fill="#c8452c" stroke="#f0d0c8" strokeWidth=".6" /><path d="M11 5c1.500 2 1.500 4 0 6M13.500 3c2.500 3 2.500 7 0 10" fill="none" stroke="#a03020" /></svg>
      <svg width="16" height="16" viewBox="0 0 16 16" className="ml-2.5"><circle cx="8" cy="8" r="8" fill="#ffd21a" /><circle cx="8" cy="8" r="5.500" fill="#f4e33a" /><path d="M8 4v8M4 8h8" stroke="#1d9a2a" strokeWidth="3" /></svg>
      <span className="ml-2 w-4 h-4 rounded-[2px] bg-[#fdae15] flex items-center justify-center"><CloudLogo color="#fff" size={13} /></span>
      <span className="ml-2 w-4 h-4 rounded-[2px] bg-white flex items-center justify-center"><CraneLogo size={14} /></span>
      <span className="ml-2"><GLogo size={16} /></span>
      <svg width="16" height="14" viewBox="0 0 16 14" className="ml-2" fill="#fff"><path d="M0 11h2v2H0zM3.500 9h2v4h-2zM7 6h2v7H7zM10.500 3h2v10h-2zM14 0h2v13h-2z" /></svg>
      <svg width="16" height="14" viewBox="0 0 16 14" className="ml-2"><path d="M0 4.500h3L7 1v12L3 9.500H0z" fill="#fff" /><path d="M9 5c1 1.300 1 2.700 0 4M11 3c2 2.500 2 5.500 0 8M13 1c3 4 3 8 0 12" fill="none" stroke="#fff" /></svg>
      <div className="ml-4 w-[62px] text-center text-white leading-[18px]">
        <div>14:50</div>
        <div>2024/7/21</div>
      </div>
      <span className="ml-4 w-4 h-3.5 bg-white flex items-center justify-center">
        <svg width="5" height="6" viewBox="0 0 5 6"><path d="M0 0l5 3-5 3z" fill="#1b2d50" /></svg>
      </span>
      <button aria-label="显示桌面" className="ml-3 h-full w-3.5 border border-[#6f93bd] bg-white/15" />
    </div>
  );
}

function Taskbar() {
  return (
    <div className="shrink-0 relative overflow-hidden flex items-center h-[39px] border-t border-[#16395c] bg-[linear-gradient(90deg,#1b5587_0%,#23679a_4%,#4f9fcb_15%,#5fb0d8_28%,#4aa3d5_42%,#3a95cf_54%,#2a7fc2_64%,#2268b0_74%,#1b4a80_78%,#163a68_100%)]">
      <svg className="absolute left-[67%] top-0 h-full w-[120px] blur-[2px]" viewBox="0 0 120 39" aria-hidden="true">
        <path d="M14 -2h16q34 18 56 44H68Q44 16 14 -2z" fill="#b5dbfa" opacity=".8" />
      </svg>
      <button aria-label="开始" className="ml-2 relative">
        <svg width="38" height="38" viewBox="0 0 38 38">
          <defs>
            <radialGradient id="orb" cx="50%" cy="90%" r="80%">
              <stop offset="0" stopColor="#3fd0ff" />
              <stop offset=".5" stopColor="#1e5f98" />
              <stop offset="1" stopColor="#8fb4cc" />
            </radialGradient>
          </defs>
          <circle cx="19" cy="19" r="17.500" fill="url(#orb)" stroke="#7fa9c8" />
          <path d="M11 11c3-2 5-2 7 0l-1.500 7c-2-1.500-4-1.500-7 0z" fill="#f0622a" />
          <path d="M19.500 11.500c3 1.500 5 1.500 8-.5L26 18c-3 1.500-5 1.500-8 .5z" fill="#8cc63e" />
          <path d="M9 20c3-1.500 5-1.500 7 0l-1.500 7c-2-1.500-4-1.500-7 0z" fill="#4fa8ea" />
          <path d="M17.500 20.500c3 1.500 5 1.500 8 0L24 27c-3 1.500-5 1.500-8 .5z" fill="#ffc928" />
        </svg>
      </button>
      <span className="ml-3"><Grip /></span>
      <div className="flex gap-1 ml-2.5 h-full">
        {apps.map((app) => (
          <button
            key={app.name}
            aria-label={app.name}
            className={`w-[58px] h-full rounded-[3px] border border-[#d4ecf8]/80 flex items-center justify-center ${
              app.name === "预算" ? "bg-white/50" : "bg-white/20"
            }`}
          >
            {app.icon}
          </button>
        ))}
      </div>
      <Tray />
    </div>
  );
}

export default function App() {
  return (
    <div className="h-screen flex flex-col overflow-hidden bg-[#f5f5f5] text-xs font-['Noto_Sans','Noto_Sans_CJK_SC',sans-serif]">
      <Header />
      <Ribbon />
      <ModuleTabs />
      <main className="flex-1 min-h-0 flex">
        <Sidebar />
        <div className="flex-1 min-w-0 flex flex-col">
          <PriceTable />
          <ServicePanel />
        </div>
      </main>
      <StatusBar />
      <Taskbar />
    </div>
  );
}
